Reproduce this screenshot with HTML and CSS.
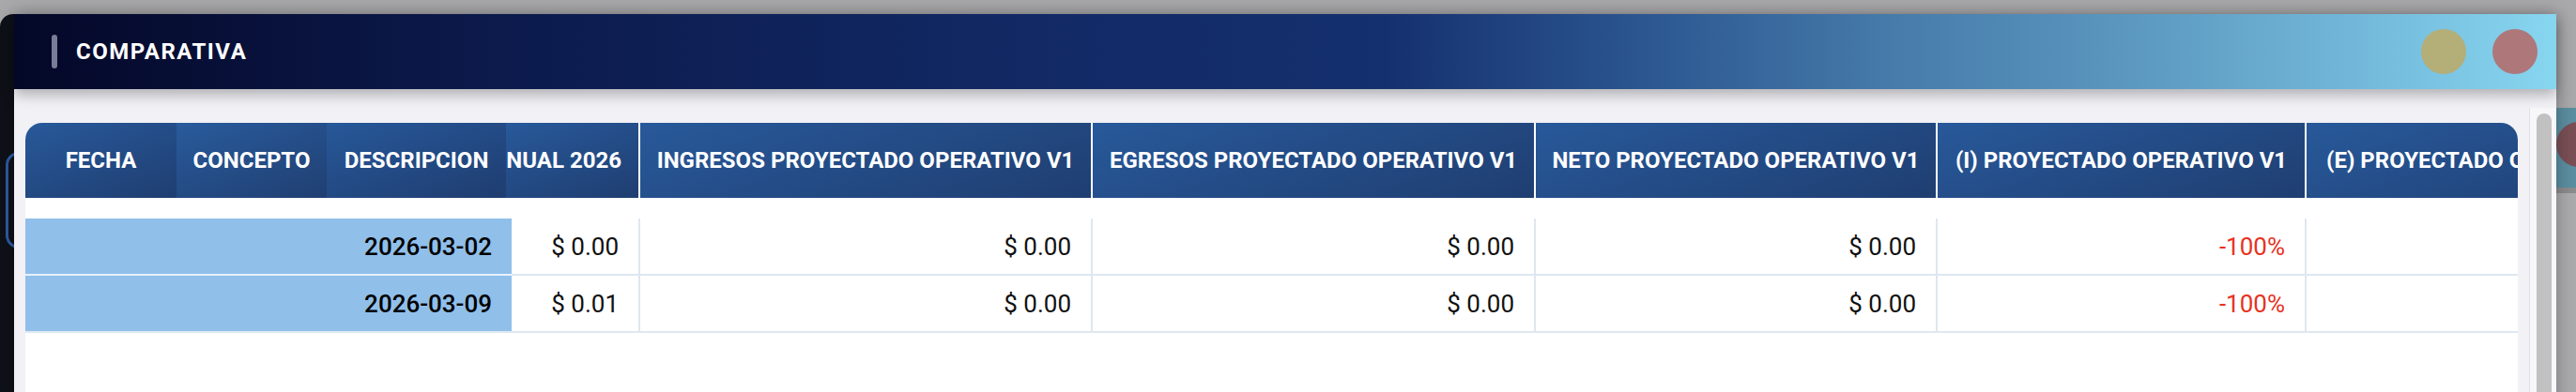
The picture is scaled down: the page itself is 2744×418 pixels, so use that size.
FILE: index.html
```html
<!DOCTYPE html>
<html lang="es">
<head>
    <meta charset="UTF-8">
    <meta name="viewport" content="width=device-width, initial-scale=1.0">
    <title>Comparativa</title>
    <link rel="stylesheet" href="styles.css">
</head>
<body>
    <!-- ventanas de fondo -->
    <div class="back-left"><span class="back-outline"></span></div>
    <div class="back-right">
        <div class="back-right-bar"><span class="back-dot"></span></div>
        <div class="back-right-sep"></div>
        <div class="back-right-box"></div>
    </div>

    <div class="window">
        <header class="titlebar">
            <span class="title-mark"></span>
            <h1 class="title">COMPARATIVA</h1>
            <div class="controls">
                <span class="dot dot-min"></span>
                <span class="dot dot-close"></span>
            </div>
        </header>

        <div class="content">
            <div class="pane">
                <div class="table">
                    <div class="thead">
                        <div class="th th-fecha">FECHA</div>
                        <div class="th th-concepto">CONCEPTO</div>
                        <div class="th th-desc">DESCRIPCION</div>
                        <div class="th th-col th-anual">NUAL 2026</div>
                        <div class="th th-col w-ing">INGRESOS PROYECTADO OPERATIVO V1</div>
                        <div class="th th-col w-egr">EGRESOS PROYECTADO OPERATIVO V1</div>
                        <div class="th th-col w-neto">NETO PROYECTADO OPERATIVO V1</div>
                        <div class="th th-col w-pi">(I) PROYECTADO OPERATIVO V1</div>
                        <div class="th th-last">(E) PROYECTADO OPERATIVO V1</div>
                    </div>

                    <div class="spacer"></div>

                    <div class="tr">
                        <div class="td td-fixed">2026-03-02</div>
                        <div class="td w-anual">$ 0.00</div>
                        <div class="td w-ing">$ 0.00</div>
                        <div class="td w-egr">$ 0.00</div>
                        <div class="td w-neto">$ 0.00</div>
                        <div class="td w-pi neg">-100%</div>
                        <div class="td w-pe"></div>
                    </div>
                    <div class="tr">
                        <div class="td td-fixed">2026-03-09</div>
                        <div class="td w-anual">$ 0.01</div>
                        <div class="td w-ing">$ 0.00</div>
                        <div class="td w-egr">$ 0.00</div>
                        <div class="td w-neto">$ 0.00</div>
                        <div class="td w-pi neg">-100%</div>
                        <div class="td w-pe"></div>
                    </div>
                </div>
            </div>
            <div class="scrollbar"><span class="thumb"></span></div>
        </div>
    </div>
</body>
</html>
```

FILE: styles.css
```css
body {
    margin: 0;
    height: 418px;
    overflow: hidden;
    position: relative;
    background: #a9a8ab;
    font-family: Roboto, "Liberation Sans", sans-serif;
}

/* ventanas de fondo */
.back-left {
    position: absolute;
    left: 0;
    top: 15px;
    width: 40px;
    height: 420px;
    background: #0e1118;
    border-radius: 14px 0 0 0;
}

.back-outline {
    position: absolute;
    left: 6px;
    top: 147px;
    width: 40px;
    height: 97px;
    border: 3px solid #2d5ca5;
    border-radius: 14px;
}

.back-right {
    position: absolute;
    left: 2723px;
    top: 115px;
    width: 40px;
    height: 320px;
    display: flex;
    flex-direction: column;
}

.back-right-bar {
    height: 85px;
    background: #5b8ea0;
    position: relative;
    overflow: hidden;
}

.back-dot {
    position: absolute;
    left: 0;
    top: 15px;
    width: 48px;
    height: 48px;
    border-radius: 50%;
    background: #7a4f56;
}

.back-right-sep {
    height: 6px;
    background: #8c8c8e;
}

.back-right-box {
    flex: 1;
    background: #ababad;
}

/* ventana principal */
.window {
    position: absolute;
    left: 15px;
    top: 15px;
    width: 2708px;
    height: 420px;
    display: flex;
    flex-direction: column;
    background: #f1f1f6;
    box-shadow: 0 0 18px rgba(0, 0, 0, 0.3);
}

.titlebar {
    height: 80px;
    flex-shrink: 0;
    display: flex;
    align-items: center;
    padding: 0 20px 0 40px;
    background: linear-gradient(90deg, #040828 0%, #0c1a4c 19%, #112863 38%, #15306f 54%, #2b5690 64%, #4478a8 73%, #5b97bf 83%, #72b7d9 92%, #87d6f0 100%);
    box-shadow: 0 6px 14px rgba(0, 0, 0, 0.28);
    position: relative;
    z-index: 1;
}

.title-mark {
    width: 6px;
    height: 36px;
    border-radius: 3px;
    background: #7a7d97;
    margin-right: 20px;
}

.title {
    margin: 0;
    font-size: 24px;
    font-weight: 700;
    letter-spacing: 1.5px;
    color: #fff;
}

.controls {
    margin-left: auto;
    display: flex;
    gap: 28px;
}

.dot {
    width: 48px;
    height: 48px;
    border-radius: 50%;
}

.dot-min {
    background: #b4ae78;
}

.dot-close {
    background: #ae777a;
}

.content {
    flex: 1;
    display: flex;
    min-height: 0;
}

.pane {
    flex: 1;
    min-width: 0;
    padding: 36px 12px 0 12px;
}

.scrollbar {
    width: 29px;
    margin-top: 20px;
    border-left: 1px solid #e2e2e6;
    background: #f7f7f9;
    padding: 6px 0 0 7px;
    box-sizing: border-box;
}

.thumb {
    display: block;
    width: 16px;
    height: 400px;
    border-radius: 8px;
    background: #c1c1c1;
}

/* tabla */
.table {
    height: 100%;
    background: #fff;
    border-radius: 18px 18px 0 0;
    overflow: hidden;
}

.thead {
    display: flex;
    height: 80px;
}

.th {
    flex-shrink: 0;
    box-sizing: border-box;
    display: flex;
    align-items: center;
    justify-content: center;
    overflow: hidden;
    white-space: nowrap;
    color: #fff;
    font-size: 24px;
    font-weight: 700;
    background: linear-gradient(160deg, #28599a, #1f3e71);
}

.th-col {
    border-right: 2px solid #fff;
}

.th-fecha {
    width: 161px;
}

.th-concepto {
    width: 160px;
    background: linear-gradient(160deg, #295b9c, #203f72);
}

.th-desc {
    width: 191px;
    background: linear-gradient(160deg, #275899, #1f3d70);
}

.th-anual {
    width: 143px;
    justify-content: flex-end;
    padding-right: 18px;
}

.th-last {
    padding: 0 21px;
    justify-content: flex-start;
}

.spacer {
    height: 22px;
}

.tr {
    display: flex;
    height: 61px;
}

.td {
    flex-shrink: 0;
    box-sizing: border-box;
    display: flex;
    align-items: center;
    justify-content: flex-end;
    padding-right: 21px;
    border-right: 2px solid #dfe7f0;
    border-bottom: 2px solid #dfe7f0;
    font-size: 26px;
    color: #111;
}

.td-fixed {
    width: 518px;
    background: #90bfea;
    border-right: 0;
    border-bottom-color: #e8f1fb;
    font-weight: 500;
    color: #000;
}

.tr:last-child .td-fixed {
    border-bottom-color: #dfe7f0;
}

.neg {
    color: #e8321f;
}

.w-anual {
    width: 137px;
}

.w-ing {
    width: 482px;
}

.w-egr {
    width: 472px;
}

.w-neto {
    width: 428px;
}

.w-pi {
    width: 393px;
}

.w-pe {
    width: 400px;
}
```
